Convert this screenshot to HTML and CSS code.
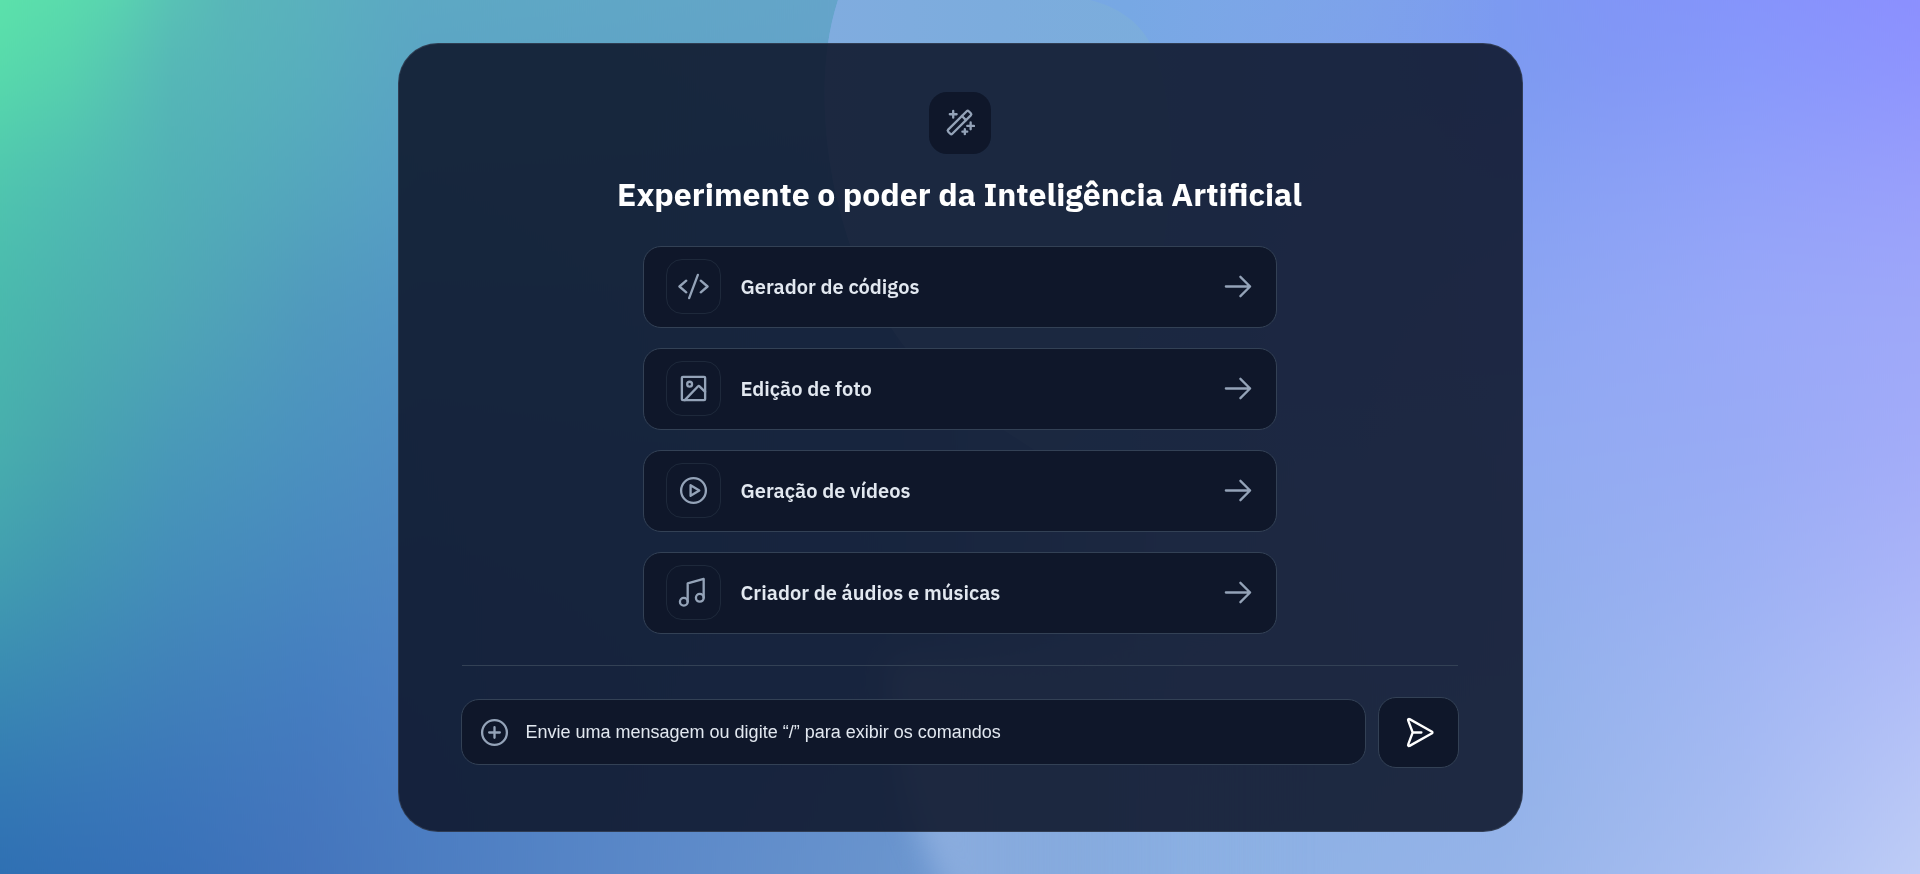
FILE: index.html
```html
<!DOCTYPE html>
<html lang="pt-BR">
<head>
<meta charset="utf-8">
<meta name="viewport" content="width=device-width, initial-scale=1">
<title>Inteligência Artificial</title>
<link rel="stylesheet" href="styles.css">
</head>
<body>
<svg class="backdrop" viewBox="0 0 1920 874" preserveAspectRatio="none" aria-hidden="true">
  <defs>
    <filter id="blend" filterUnits="userSpaceOnUse" x="-100" y="-300" width="2120" height="1474" color-interpolation-filters="sRGB"><feGaussianBlur stdDeviation="0 55"/></filter>
    <filter id="edge" x="-20%" y="-20%" width="140%" height="140%" color-interpolation-filters="sRGB"><feGaussianBlur stdDeviation="14"/></filter>
    <linearGradient id="r0"><stop offset="0" stop-color="#5ee6aa"/><stop offset=".06" stop-color="#5bdfae"/><stop offset=".12" stop-color="#5ab8b8"/><stop offset=".2" stop-color="#5dacc2"/><stop offset=".43" stop-color="#66a6c9"/><stop offset=".6" stop-color="#76a8e5"/><stop offset=".72" stop-color="#79a1ea"/><stop offset=".84" stop-color="#8094f8"/><stop offset="1" stop-color="#8a8cff"/></linearGradient>
    <linearGradient id="r1"><stop offset="0" stop-color="#58dcab"/><stop offset=".035" stop-color="#57d3ad"/><stop offset=".09" stop-color="#56b7b7"/><stop offset=".16" stop-color="#58afbd"/><stop offset=".22" stop-color="#5ba5c4"/><stop offset=".43" stop-color="#63a3c9"/><stop offset=".6" stop-color="#78a6e4"/><stop offset=".78" stop-color="#7b9af0"/><stop offset=".84" stop-color="#8197f5"/><stop offset=".91" stop-color="#8698fb"/><stop offset="1" stop-color="#8d93fe"/></linearGradient>
    <linearGradient id="r2"><stop offset="0" stop-color="#4fc4af"/><stop offset=".03" stop-color="#4fbdb2"/><stop offset=".09" stop-color="#51b0b6"/><stop offset=".16" stop-color="#54a6bd"/><stop offset=".22" stop-color="#579fc6"/><stop offset=".44" stop-color="#5f9dc9"/><stop offset=".6" stop-color="#7ca5e4"/><stop offset=".78" stop-color="#84a0f2"/><stop offset=".91" stop-color="#91a1f9"/><stop offset="1" stop-color="#999ffb"/></linearGradient>
    <linearGradient id="r3"><stop offset="0" stop-color="#49b8ad"/><stop offset=".03" stop-color="#4bb2af"/><stop offset=".09" stop-color="#4fa7b5"/><stop offset=".16" stop-color="#5099bd"/><stop offset=".22" stop-color="#5295c4"/><stop offset=".46" stop-color="#5e97c9"/><stop offset=".62" stop-color="#80a6e4"/><stop offset=".78" stop-color="#8ba5f1"/><stop offset=".91" stop-color="#98a8f8"/><stop offset="1" stop-color="#9ea8f9"/></linearGradient>
    <linearGradient id="r4"><stop offset="0" stop-color="#48afad"/><stop offset=".03" stop-color="#48a7ae"/><stop offset=".09" stop-color="#499ab8"/><stop offset=".16" stop-color="#4b92bf"/><stop offset=".22" stop-color="#508dc3"/><stop offset=".46" stop-color="#5d92c9"/><stop offset=".62" stop-color="#83a9e4"/><stop offset=".78" stop-color="#90aaf1"/><stop offset=".91" stop-color="#98aaf5"/><stop offset="1" stop-color="#a2abf9"/></linearGradient>
    <linearGradient id="r5"><stop offset="0" stop-color="#429fb0"/><stop offset=".03" stop-color="#4198b1"/><stop offset=".09" stop-color="#448eba"/><stop offset=".16" stop-color="#4888bf"/><stop offset=".22" stop-color="#4e86c2"/><stop offset=".46" stop-color="#5c8fc9"/><stop offset=".62" stop-color="#86abe3"/><stop offset=".78" stop-color="#8facec"/><stop offset=".91" stop-color="#9cb0f4"/><stop offset="1" stop-color="#a9b3f8"/></linearGradient>
    <linearGradient id="r6"><stop offset="0" stop-color="#3989b3"/><stop offset=".09" stop-color="#4080b9"/><stop offset=".16" stop-color="#447dc0"/><stop offset=".22" stop-color="#4d80c4"/><stop offset=".46" stop-color="#608fcb"/><stop offset=".62" stop-color="#89aee4"/><stop offset=".78" stop-color="#90b0ea"/><stop offset=".91" stop-color="#a2b7f3"/><stop offset="1" stop-color="#b1bef8"/></linearGradient>
    <linearGradient id="r7"><stop offset="0" stop-color="#3275b4"/><stop offset=".09" stop-color="#3b74ba"/><stop offset=".16" stop-color="#4476bd"/><stop offset=".22" stop-color="#4b7dc2"/><stop offset=".34" stop-color="#5a88c8"/><stop offset=".46" stop-color="#6893cd"/><stop offset=".62" stop-color="#8bb0e3"/><stop offset=".78" stop-color="#93b2e8"/><stop offset=".91" stop-color="#a7bcf2"/><stop offset="1" stop-color="#bac8f6"/></linearGradient>
    <linearGradient id="r8"><stop offset="0" stop-color="#2c6bb2"/><stop offset=".09" stop-color="#366eb7"/><stop offset=".16" stop-color="#4373bc"/><stop offset=".22" stop-color="#4c7cc0"/><stop offset=".34" stop-color="#5c89c9"/><stop offset=".46" stop-color="#6a95ce"/><stop offset=".62" stop-color="#8bb0e3"/><stop offset=".78" stop-color="#97b5ea"/><stop offset=".91" stop-color="#aec2f3"/><stop offset="1" stop-color="#c2d1f7"/></linearGradient>
    <linearGradient id="arc"><stop offset="0" stop-color="#80acdf"/><stop offset=".5" stop-color="#7cacdd"/><stop offset="1" stop-color="#7caeda" stop-opacity=".8"/></linearGradient>
    <linearGradient id="halo"><stop offset="0" stop-color="#7aa9e2"/><stop offset=".45" stop-color="#77a8e4"/><stop offset="1" stop-color="#8aa4ee" stop-opacity="0"/></linearGradient>
    <linearGradient id="pool"><stop offset="0" stop-color="#8fafdf"/><stop offset="1" stop-color="#8bb0e3" stop-opacity="0"/></linearGradient>
  </defs>
  <g filter="url(#blend)">
    <rect y="-300" width="1920" height="300" fill="url(#r0)"/>
    <rect width="1920" height="125" fill="url(#r1)"/>
    <rect y="125" width="1920" height="125" fill="url(#r2)"/>
    <rect y="250" width="1920" height="125" fill="url(#r3)"/>
    <rect y="375" width="1920" height="125" fill="url(#r4)"/>
    <rect y="500" width="1920" height="125" fill="url(#r5)"/>
    <rect y="625" width="1920" height="125" fill="url(#r6)"/>
    <rect y="750" width="1920" height="124" fill="url(#r7)"/>
    <rect y="874" width="1920" height="300" fill="url(#r8)"/>
  </g>
  <path d="M838 0C812 80 826 190 860 270C910 380 960 400 1050 460L1500 460V0Z" fill="url(#halo)"/>
  <path d="M838 0C812 80 826 190 860 270C910 380 960 400 1050 460C1180 360 1190 120 1150 43C1138 20 1115 6 1090 0Z" fill="url(#arc)"/>
  <path d="M890 660C895 780 920 850 965 920H1300V660Z" fill="url(#pool)" filter="url(#edge)"/>
</svg>
<main class="page">
  <section class="card">
    <div class="badge">
      <svg class="icon" viewBox="0 0 32 32" aria-hidden="true"><g transform="rotate(-45 16 16)"><rect x="1" y="13" width="30" height="6" rx="1.500"/><path d="M22.500 13v6"/></g><path d="M9.500 4v7M6 7.500h7M27.500 16v7M24 19.500h7M21.500 23v5M19 25.500h5"/></svg>
    </div>
    <h1 class="title">Experimente o poder da Inteligência Artificial</h1>
    <div class="options">
      <button class="option" type="button">
        <span class="option-icon"><svg class="icon" viewBox="0 0 32 32" aria-hidden="true"><path d="M8.500 10 1.500 16l7 6M23.500 10l7 6-7 6M20.500 4l-9 24"/></svg></span>
        <span class="option-label">Gerador de códigos</span>
        <svg class="icon" viewBox="0 0 32 32" aria-hidden="true"><path d="M4 16h25M19 6l10 10-10 10"/></svg>
      </button>
      <button class="option" type="button">
        <span class="option-icon"><svg class="icon" viewBox="0 0 32 32" aria-hidden="true"><rect x="4" y="4" width="24" height="24" rx="1"/><circle cx="12" cy="11.500" r="2.500"/><path d="M7 28 20.500 14q1-1 2 0l5.500 5.500"/></svg></span>
        <span class="option-label">Edição de foto</span>
        <svg class="icon" viewBox="0 0 32 32" aria-hidden="true"><path d="M4 16h25M19 6l10 10-10 10"/></svg>
      </button>
      <button class="option" type="button">
        <span class="option-icon"><svg class="icon" viewBox="0 0 32 32" aria-hidden="true"><circle cx="16" cy="16" r="12.800"/><path d="m13 10.500 9 5.500-9 5.500z"/></svg></span>
        <span class="option-label">Geração de vídeos</span>
        <svg class="icon" viewBox="0 0 32 32" aria-hidden="true"><path d="M4 16h25M19 6l10 10-10 10"/></svg>
      </button>
      <button class="option" type="button">
        <span class="option-icon"><svg class="icon" viewBox="0 0 32 32" aria-hidden="true"><circle cx="6" cy="25.500" r="4"/><circle cx="22.500" cy="21.500" r="4"/><path d="M10 25.500V6.500l16.500-4.500V21.500"/></svg></span>
        <span class="option-label">Criador de áudios e músicas</span>
        <svg class="icon" viewBox="0 0 32 32" aria-hidden="true"><path d="M4 16h25M19 6l10 10-10 10"/></svg>
      </button>
    </div>
    <hr class="divider">
    <form class="composer">
      <div class="field">
        <button class="attach" type="button" aria-label="Adicionar"><svg class="icon" viewBox="0 0 32 32" aria-hidden="true"><circle cx="16" cy="16" r="12.800"/><path d="M10.500 16h11M16 10.500v11"/></svg></button>
        <input class="message" type="text" aria-label="Mensagem" placeholder="Envie uma mensagem ou digite “/” para exibir os comandos">
      </div>
      <button class="send" type="submit" aria-label="Enviar"><svg class="icon" viewBox="0 0 32 32" aria-hidden="true"><path d="M6.800 2.200 30 15.200a1 1 0 0 1 0 1.600L6.800 29.800a1 1 0 0 1-1.500-1.200L10 16 5.300 3.400a1 1 0 0 1 1.500-1.200ZM10 16h9"/></svg></button>
    </form>
  </section>
</main>
</body>
</html>
```
FILE: styles.css
```css
* {
  box-sizing: border-box;
}

body {
  margin: 0;
  background: #6fa0d8;
  font-family: "IBM Plex Sans", "Noto Sans", sans-serif;
}

.backdrop {
  position: fixed;
  inset: 0;
  width: 100%;
  height: 100%;
}

.page {
  position: relative;
  display: grid;
  place-items: center;
  min-height: 100vh;
  padding: 24px;
}

.card {
  display: flex;
  flex-direction: column;
  align-items: center;
  width: 100%;
  max-width: 1125px;
  padding: 48px 63px 63px 62px;
  border: 1px solid rgba(71, 85, 105, 0.5);
  border-radius: 40px;
  background: rgba(14, 22, 42, 0.88);
}

.icon {
  flex: none;
  width: 31px;
  height: 31px;
  fill: none;
  stroke: #94a3b8;
  stroke-width: 2.4;
  stroke-linecap: round;
  stroke-linejoin: round;
}

.badge {
  display: grid;
  place-items: center;
  width: 62px;
  height: 62px;
  border-radius: 18px;
  background: #0f172a;
}

.title {
  margin: 20px 0 32px;
  color: #fff;
  font-size: 32px;
  font-weight: 700;
  line-height: 40px;
  text-align: center;
}

.options {
  display: grid;
  gap: 20px;
  width: 100%;
  max-width: 634px;
}

.option {
  display: flex;
  align-items: center;
  gap: 20px;
  min-height: 82px;
  padding: 12px 23px 12px 22px;
  border: 1px solid #334155;
  border-radius: 18px;
  background: #0f172a;
  color: #e2e8f0;
  font-family: inherit;
  font-size: 20px;
  font-weight: 600;
  line-height: 28px;
  text-align: left;
}

.option-icon {
  display: grid;
  place-items: center;
  width: 55px;
  height: 55px;
  border: 1px solid #1e293b;
  border-radius: 16px;
}

.option-label {
  flex: 1;
}

.divider {
  align-self: stretch;
  margin: 31px 1px 31px;
  border: 0;
  border-top: 1px solid #334155;
}

.composer {
  display: flex;
  align-items: center;
  gap: 12px;
  width: 100%;
}

.field {
  display: flex;
  flex: 1;
  align-items: center;
  gap: 16px;
  min-width: 0;
  height: 66px;
  padding: 0 17px;
  border: 1px solid #334155;
  border-radius: 18px;
  background: #0f172a;
}

.attach {
  display: flex;
  padding: 0;
  border: 0;
  background: none;
}

.message {
  flex: 1;
  min-width: 0;
  padding: 0;
  border: 0;
  outline: 0;
  background: none;
  color: #e2e8f0;
  font-family: "Liberation Sans", Arial, sans-serif;
  font-size: 18px;
}

.message::placeholder {
  color: #e2e8f0;
  opacity: 1;
}

.send {
  display: grid;
  place-items: center;
  width: 81px;
  height: 71px;
  padding: 0;
  border: 1px solid #334155;
  border-radius: 18px;
  background: #0f172a;
}

.send .icon {
  stroke: #fff;
}
```
